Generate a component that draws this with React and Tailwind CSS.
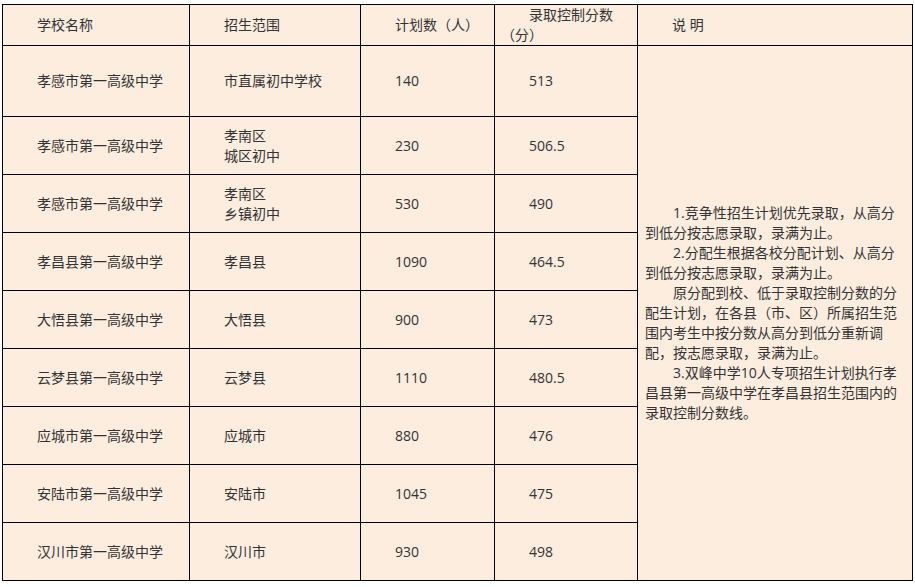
import React from 'react';

const rows = [
  { school: '孝感市第一高级中学', scope: ['市直属初中学校'], plan: '140', score: '513', tall: true },
  { school: '孝感市第一高级中学', scope: ['孝南区', '城区初中'], plan: '230', score: '506.5' },
  { school: '孝感市第一高级中学', scope: ['孝南区', '乡镇初中'], plan: '530', score: '490' },
  { school: '孝昌县第一高级中学', scope: ['孝昌县'], plan: '1090', score: '464.5' },
  { school: '大悟县第一高级中学', scope: ['大悟县'], plan: '900', score: '473' },
  { school: '云梦县第一高级中学', scope: ['云梦县'], plan: '1110', score: '480.5' },
  { school: '应城市第一高级中学', scope: ['应城市'], plan: '880', score: '476' },
  { school: '安陆市第一高级中学', scope: ['安陆市'], plan: '1045', score: '475' },
  { school: '汉川市第一高级中学', scope: ['汉川市'], plan: '930', score: '498' },
];

// explanation text, broken the way the source wraps it
const notes = [
  { indent: true, text: '1.竞争性招生计划优先录取，从高分' },
  { text: '到低分按志愿录取，录满为止。' },
  { indent: true, text: '2.分配生根据各校分配计划、从高分' },
  { text: '到低分按志愿录取，录满为止。' },
  { indent: true, text: '原分配到校、低于录取控制分数的分' },
  { text: '配生计划，在各县（市、区）所属招生范' },
  { text: '围内考生中按分数从高分到低分重新调' },
  { text: '配，按志愿录取，录满为止。' },
  { indent: true, text: '3.双峰中学10人专项招生计划执行孝' },
  { text: '昌县第一高级中学在孝昌县招生范围内的' },
  { text: '录取控制分数线。' },
];

const cell = 'border border-black pl-[34px] align-middle';

export default function App() {
  return (
    <div
      className="w-[915px] h-[587px] bg-white pt-[4px] pl-[2px] text-[14px] leading-[20px] text-[#333]"
      style={{ fontFamily: '"Open Sans", "Noto Sans CJK SC", sans-serif' }}
    >
      <table className="table-fixed border-collapse bg-[#fdeddf] w-[910px]">
        <colgroup>
          <col className="w-[187px]" />
          <col className="w-[171px]" />
          <col className="w-[134px]" />
          <col className="w-[143px]" />
          <col className="w-[275px]" />
        </colgroup>
        <thead>
          <tr className="h-[40px]">
            <th className={`${cell} text-left font-normal`}>学校名称</th>
            <th className={`${cell} text-left font-normal`}>招生范围</th>
            <th className={`${cell} text-left font-normal`}>计划数（人）</th>
            <th className="border border-black pl-[6px] text-left font-normal align-middle">
              <div className="indent-[28px]">录取控制分数（分）</div>
            </th>
            <th className={`${cell} text-left font-normal`}>说 明</th>
          </tr>
        </thead>
        <tbody>
          {rows.map((r, i) => (
            <tr key={i} className={r.tall ? 'h-[71px]' : 'h-[58px]'}>
              <td className={cell}>{r.school}</td>
              <td className={cell}>
                {r.scope.map((s) => (
                  <div key={s}>{s}</div>
                ))}
              </td>
              <td className={cell}>{r.plan}</td>
              <td className={cell}>{r.score}</td>
              {i === 0 && (
                <td rowSpan={rows.length} className="border border-black px-[7px] align-middle">
                  {notes.map((n, j) => (
                    <div key={j} className={`whitespace-nowrap ${n.indent ? 'pl-[28px]' : ''}`}>
                      {n.text}
                    </div>
                  ))}
                </td>
              )}
            </tr>
          ))}
        </tbody>
      </table>
    </div>
  );
}
